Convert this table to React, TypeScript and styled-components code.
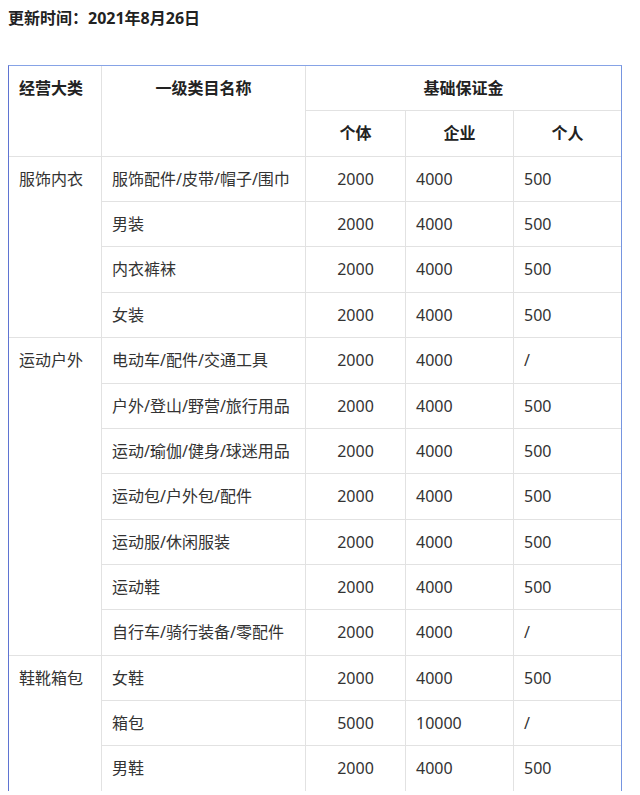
import React from 'react';
import styled, { createGlobalStyle } from 'styled-components';

const GlobalStyle = createGlobalStyle`
  body {
    margin: 8px;
    background: #fff;
    font-family: "Noto Sans", "Noto Sans CJK SC", sans-serif;
    color: #333;
  }
`;

const Title = styled.div`
  font-size: 16px;
  line-height: 20px;
  font-weight: bold;
  color: #222;
  margin-bottom: 37px;
`;

const Frame = styled.div`
  width: 612px;
  border-top: 1px solid #86a3e6;
  border-right: 1px solid #7695e0;
  border-left: 1px solid #5f74d2;
`;

const Table = styled.table`
  width: 612px;
  border-collapse: collapse;
  border-style: hidden;
  table-layout: fixed;
  font-size: 16px;
`;

const Cell = styled.td<{ $center?: boolean; $head?: boolean }>`
  border: 1px solid #e2e2e2;
  padding: 10px 10px 10.36px;
  line-height: 24px;
  vertical-align: top;
  text-align: ${(p) => (p.$center ? 'center' : 'left')};
  font-weight: ${(p) => (p.$head ? 'bold' : 'normal')};
  color: ${(p) => (p.$head ? '#222' : '#333')};
  white-space: nowrap;
  overflow: hidden;
`;

interface Group {
  name: string;
  items: [string, string, string, string][];
}

const groups: Group[] = [
  {
    name: '服饰内衣',
    items: [
      ['服饰配件/皮带/帽子/围巾', '2000', '4000', '500'],
      ['男装', '2000', '4000', '500'],
      ['内衣裤袜', '2000', '4000', '500'],
      ['女装', '2000', '4000', '500'],
    ],
  },
  {
    name: '运动户外',
    items: [
      ['电动车/配件/交通工具', '2000', '4000', '/'],
      ['户外/登山/野营/旅行用品', '2000', '4000', '500'],
      ['运动/瑜伽/健身/球迷用品', '2000', '4000', '500'],
      ['运动包/户外包/配件', '2000', '4000', '500'],
      ['运动服/休闲服装', '2000', '4000', '500'],
      ['运动鞋', '2000', '4000', '500'],
      ['自行车/骑行装备/零配件', '2000', '4000', '/'],
    ],
  },
  {
    name: '鞋靴箱包',
    items: [
      ['女鞋', '2000', '4000', '500'],
      ['箱包', '5000', '10000', '/'],
      ['男鞋', '2000', '4000', '500'],
    ],
  },
];

const App: React.FC = () => {
  return (
    <React.Fragment>
      <GlobalStyle />
      <Title>更新时间：2021年8月26日</Title>
      <Frame>
        <Table>
          <colgroup>
            <col style={{ width: 92.5 }} />
            <col style={{ width: 204 }} />
            <col style={{ width: 100 }} />
            <col style={{ width: 108 }} />
            <col style={{ width: 107.5 }} />
          </colgroup>
          <thead>
            <tr>
              <Cell as="th" $head rowSpan={2}>
                经营大类
              </Cell>
              <Cell as="th" $head $center rowSpan={2}>
                一级类目名称
              </Cell>
              <Cell as="th" $head $center colSpan={3}>
                基础保证金
              </Cell>
            </tr>
            <tr>
              <Cell as="th" $head $center>
                个体
              </Cell>
              <Cell as="th" $head $center>
                企业
              </Cell>
              <Cell as="th" $head $center>
                个人
              </Cell>
            </tr>
          </thead>
          <tbody>
            {groups.map((g) =>
              g.items.map((row, i) => (
                <tr key={g.name + row[0]}>
                  {i === 0 && <Cell rowSpan={g.items.length}>{g.name}</Cell>}
                  <Cell>{row[0]}</Cell>
                  <Cell $center>{row[1]}</Cell>
                  <Cell>{row[2]}</Cell>
                  <Cell>{row[3]}</Cell>
                </tr>
              ))
            )}
          </tbody>
        </Table>
      </Frame>
    </React.Fragment>
  );
};

export default App;
